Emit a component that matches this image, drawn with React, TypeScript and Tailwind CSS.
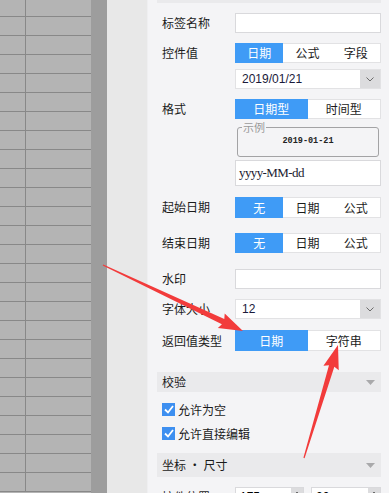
import React from 'react';

const cjk = { fontFamily: '"Noto Sans CJK SC", "Liberation Sans", sans-serif' };

type SegProps = { items: string[]; active: number; h?: string };

const Segmented: React.FC<SegProps> = ({ items, active, h = 'h-[20px]' }) => (
  <div className={`flex ${h} w-[146px] bg-white border-y border-r border-[#e2e2e4]`}>
    {items.map((it, i) => (
      <div
        key={it}
        className={`flex-1 flex items-center justify-center text-[12px] leading-none ${
          i === active ? 'bg-[#3f9bf6] text-white -my-px' : 'text-[#1b1b1b]'
        }`}
      >
        {it}
      </div>
    ))}
  </div>
);

const TextBox: React.FC<{ h?: string; children?: React.ReactNode }> = ({ h = 'h-[20px]', children }) => (
  <div className={`${h} w-[146px] bg-white border border-[#d9d9dc] flex items-center px-[5px]`}>{children}</div>
);

const Select: React.FC<{ value: string }> = ({ value }) => (
  <div className="h-[20px] w-[146px] bg-white border border-[#e2e2e4] flex">
    <div className="flex-1 flex items-center pl-[6px] text-[12px] text-[#1a1a3a]" style={{ fontFamily: '"Liberation Sans", sans-serif' }}>
      {value}
    </div>
    <div className="w-[20px] bg-[#dcdcde] flex items-center justify-center">
      <svg width="8" height="5" viewBox="0 0 8 5">
        <path d="M0.5 0.5 L4 4 L7.5 0.5" fill="none" stroke="#6b6b6b" strokeWidth="1" />
      </svg>
    </div>
  </div>
);

const Row: React.FC<{ label: string; mt: string; children: React.ReactNode; center?: boolean }> = ({ label, mt, children, center }) => (
  <div className={`flex ${center ? 'items-center' : 'items-start'} ${mt}`}>
    <div className="w-[78px] pl-[5px] text-[12px] leading-[20px] text-[#1b1b1b]">{label}</div>
    {children}
  </div>
);

const Header: React.FC<{ title: string; h: string; mt: string }> = ({ title, h, mt }) => (
  <div className={`${h} ${mt} bg-[#eaeaec] flex items-center justify-between pl-[5px] pr-[6px]`}>
    <span className="text-[12px] text-[#1b1b1b]">{title}</span>
    <svg width="9" height="5" viewBox="0 0 9 5">
      <path d="M0 0 H9 L4.5 5 Z" fill="#a9a9ab" />
    </svg>
  </div>
);

const Check: React.FC<{ label: string; mt: string }> = ({ label, mt }) => (
  <div className={`flex items-center gap-[3px] pl-[5px] ${mt}`}>
    <div className="w-[13px] h-[13px] bg-[#3d8ff0] flex items-center justify-center">
      <svg width="10" height="9" viewBox="0 0 10 9">
        <path d="M1 4.5 L4 7.5 L9 1" fill="none" stroke="white" strokeWidth="1.8" />
      </svg>
    </div>
    <span className="text-[12px] text-[#1b1b1b] leading-none">{label}</span>
  </div>
);

const Spin: React.FC<{ value: string; w: string }> = ({ value, w }) => (
  <div className={`${w} h-[20px] bg-white border border-[#d9d9dc] flex`}>
    <div className="flex-1 pl-[4px] text-[12px] leading-[18px]" style={{ fontFamily: '"Liberation Sans", sans-serif' }}>{value}</div>
    <div className="w-[12px] bg-[#dcdcde] flex items-start justify-center pt-[3px]">
      <svg width="8" height="5" viewBox="0 0 8 5">
        <path d="M0.5 4.5 L4 1 L7.5 4.5" fill="none" stroke="#6b6b6b" strokeWidth="1" />
      </svg>
    </div>
  </div>
);

function arrowPoints(x1: number, y1: number, x2: number, y2: number) {
  const dx = x2 - x1;
  const dy = y2 - y1;
  const len = Math.hypot(dx, dy);
  const ux = dx / len;
  const uy = dy / len;
  const nx = -uy;
  const ny = ux;
  const headLen = 24;
  const bx = x2 - ux * headLen;
  const by = y2 - uy * headLen;
  const p = (x: number, y: number, w: number) => `${x + nx * w},${y + ny * w}`;
  return [
    p(x1, y1, 0.6),
    p(bx + ux * 2, by + uy * 2, 2.8),
    p(bx, by, 8),
    `${x2},${y2}`,
    p(bx, by, -8),
    p(bx + ux * 2, by + uy * 2, -2.8),
    p(x1, y1, -0.6),
  ].join(' ');
}

const rows = Array.from({ length: 26 });

export default function App() {
  return (
    <div className="relative w-[389px] h-[493px] overflow-hidden flex" style={cjk}>
      {/* spreadsheet behind */}
      <div className="w-[91px] bg-[#b4b4b4] flex flex-col -mt-[2px]">
        {rows.map((_, i) => (
          <div key={i} className="h-[19px] shrink-0 flex border-b border-[#888888]">
            <div className="w-[26px] border-r border-[#888888]" />
            <div className="flex-1" />
          </div>
        ))}
      </div>
      <div className="w-[16px] bg-[#9d9d9d]" />
      <div className="w-[40px] bg-[#e8e8e8]" />

      {/* property panel */}
      <div className="flex-1 bg-[#f4f4f6] border-l border-[#efeff1] pl-[9px] pr-[8px]">
        <div className="h-[3px] bg-[#eaeaec]" />

        <Row label="标签名称" mt="mt-[10px]">
          <TextBox />
        </Row>
        <Row label="控件值" mt="mt-[10px]">
          <Segmented items={['日期', '公式', '字段']} active={0} />
        </Row>
        <div className="mt-[6px] pl-[78px]">
          <Select value="2019/01/21" />
        </div>
        <Row label="格式" mt="mt-[10px]">
          <Segmented items={['日期型', '时间型']} active={0} />
        </Row>
        <div className="pl-[78px] mt-[2px]">
          <fieldset className="ml-[2px] w-[142px] h-[36px] border border-[#a3a3a5] rounded-[3px] px-[4px]">
            <legend className="text-[11px] text-[#9a9a9a] leading-[12px] px-[1px]">示例</legend>
            <div
              className="text-center text-[8.5px] text-[#222] leading-[16px] font-bold"
              style={{ fontFamily: '"Liberation Mono", monospace' }}
            >
              2019-01-21
            </div>
          </fieldset>
        </div>
        <div className="pl-[78px] mt-[3px]">
          <TextBox h="h-[26px]">
            <span
              className="text-[13px] text-[#1a1a30] tracking-[-0.6px] -ml-[2px]"
              style={{ fontFamily: '"Liberation Serif", serif' }}
            >
              yyyy-MM-dd
            </span>
          </TextBox>
        </div>
        <Row label="起始日期" mt="mt-[11px]">
          <Segmented items={['无', '日期', '公式']} active={0} h="h-[21px]" />
        </Row>
        <Row label="结束日期" mt="mt-[15px]">
          <Segmented items={['无', '日期', '公式']} active={0} />
        </Row>
        <Row label="水印" mt="mt-[16px]" center>
          <TextBox />
        </Row>
        <Row label="字体大小" mt="mt-[10px]" center>
          <Select value="12" />
        </Row>
        <Row label="返回值类型" mt="mt-[11px]" center>
          <Segmented items={['日期', '字符串']} active={0} h="h-[21px]" />
        </Row>

        <Header title="校验" h="h-[20px]" mt="mt-[21px]" />
        <Check label="允许为空" mt="mt-[11px]" />
        <Check label="允许直接编辑" mt="mt-[11px]" />
        <Header title="坐标 · 尺寸" h="h-[24px]" mt="mt-[13px]" />
        <Row label="控件位置" mt="mt-[10px]">
          <div className="flex gap-[7px]">
            <Spin value="175" w="w-[69px]" />
            <Spin value="20" w="w-[70px]" />
          </div>
        </Row>
      </div>

      {/* annotation arrows */}
      <svg className="absolute inset-0 pointer-events-none" width="389" height="493">
        <polygon points={arrowPoints(103, 265, 243, 331)} fill="#f23b3b" />
        <polygon points={arrowPoints(304, 458, 338, 345)} fill="#f23b3b" />
      </svg>
    </div>
  );
}
